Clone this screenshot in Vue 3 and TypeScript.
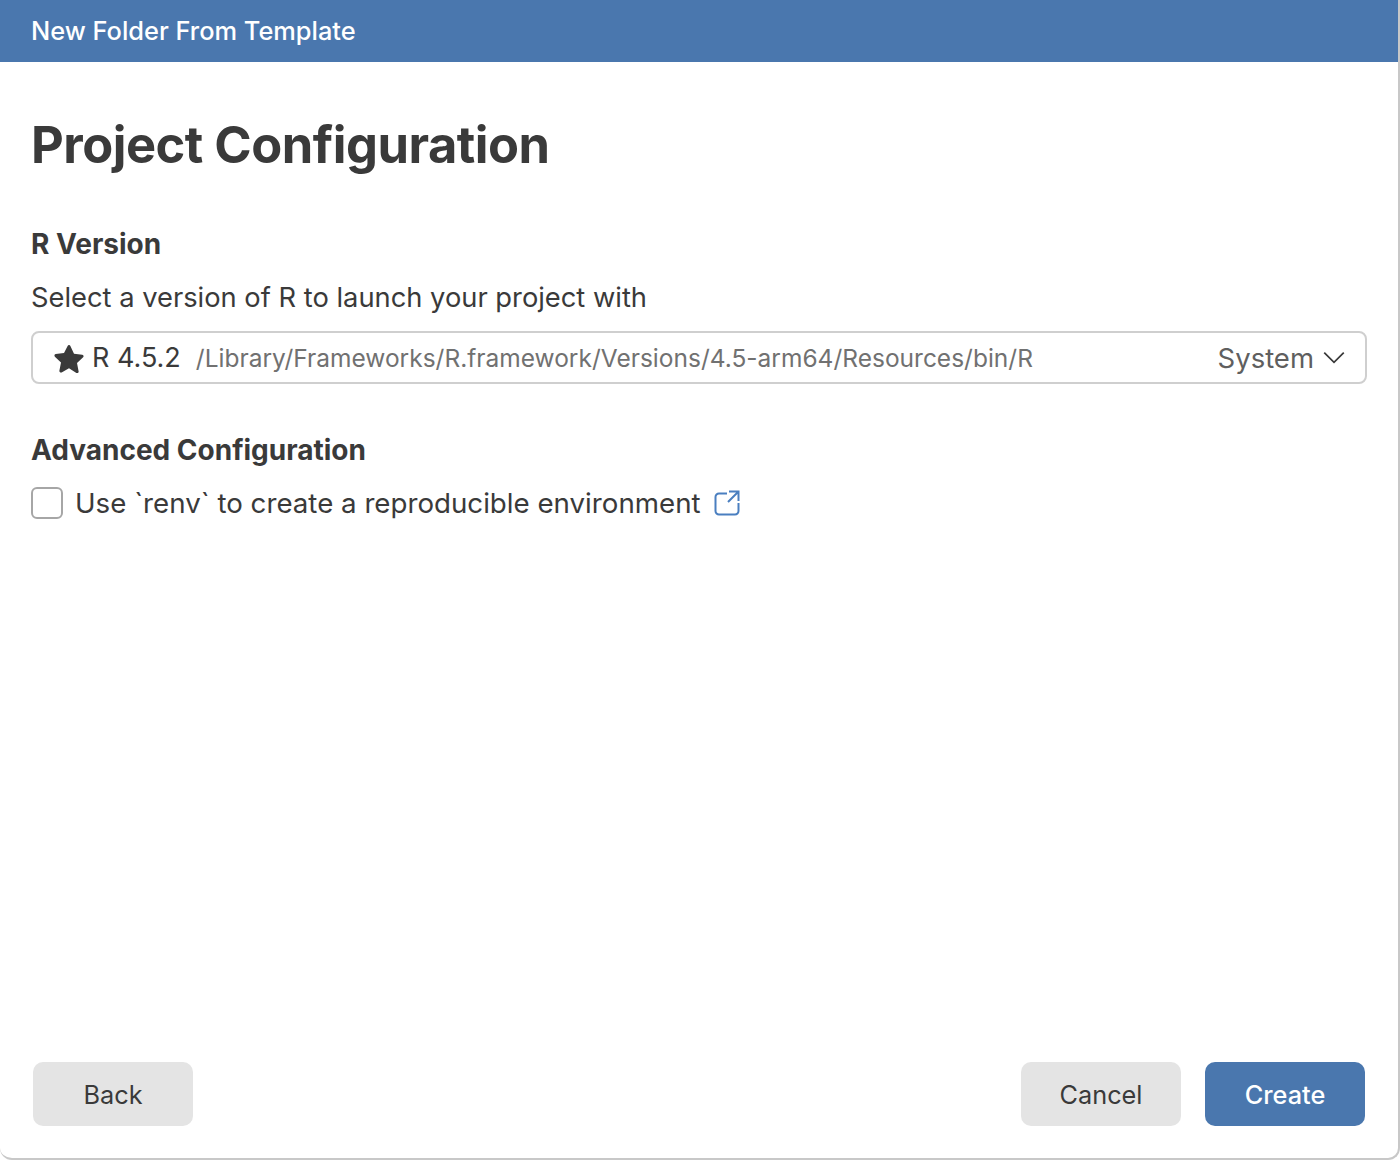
<script setup lang="ts">
const rVersion = {
  label: 'R 4.5.2',
  path: '/Library/Frameworks/R.framework/Versions/4.5-arm64/Resources/bin/R',
  source: 'System'
}
</script>

<template>
  <div class="dialog">
    <header class="title-bar">New Folder From Template</header>

    <main class="content">
      <h1 class="page-title">Project Configuration</h1>

      <section class="r-section">
        <h2 class="section-title">R Version</h2>
        <p class="section-description">Select a version of R to launch your project with</p>
        <div class="version-select">
          <svg class="star" viewBox="0 0 24 24" width="30" height="30" aria-hidden="true">
            <path d="M12 1.6c.5 0 .9.3 1.1.7l2.9 6.2 6.6.8c1 .1 1.4 1.4.7 2.1l-4.9 4.6 1.3 6.7c.2 1-.9 1.8-1.8 1.3L12 20.2l-5.9 3.3c-.9.5-2-.3-1.8-1.3l1.3-6.7-4.9-4.6c-.7-.7-.3-2 .7-2.1L8 8l2.9-5.7c.2-.4.6-.7 1.1-.7z" />
          </svg>
          <span class="version-label">{{ rVersion.label }}</span>
          <span class="version-path">{{ rVersion.path }}</span>
          <span class="version-source">{{ rVersion.source }}</span>
          <svg class="chevron" viewBox="0 0 20 12" width="22" height="13" aria-hidden="true">
            <path d="M1 1.5l9 9 9-9" />
          </svg>
        </div>
      </section>

      <section class="advanced-section">
        <h2 class="section-title">Advanced Configuration</h2>
        <label class="check-row">
          <input class="check" type="checkbox" />
          <span class="check-label">Use `renv` to create a reproducible environment</span>
          <svg class="external" viewBox="0 0 26 26" width="26" height="26" aria-hidden="true">
            <path d="M13 3.5H5a3.5 3.5 0 0 0-3.5 3.5v14A3.5 3.5 0 0 0 5 24.500h16a3.500 3.500 0 0 0 3.500-3.500v-8" />
            <path d="M15 1.500h9.500V11M24.500 1.500L14 12" />
          </svg>
        </label>
      </section>
    </main>

    <footer class="actions">
      <button class="btn" type="button">Back</button>
      <div class="actions-right">
        <button class="btn" type="button">Cancel</button>
        <button class="btn primary" type="button">Create</button>
      </div>
    </footer>
  </div>
</template>

<style>
html,
body {
  margin: 0;
  background: #ffffff;
}
</style>

<style scoped>
.dialog {
  box-sizing: border-box;
  width: 1400px;
  height: 1160px;
  display: flex;
  flex-direction: column;
  background: #ffffff;
  border-right: 2px solid #c8c8c8;
  border-bottom: 2px solid #c8c8c8;
  border-radius: 0 0 12px 12px;
  font-family: Inter, "Liberation Sans", sans-serif;
  color: #3a3a3a;
  overflow: hidden;
}

.title-bar {
  box-sizing: border-box;
  height: 62px;
  margin-right: -2px;
  padding: 0 0 2px 31px;
  display: flex;
  align-items: center;
  flex-shrink: 0;
  background: #4a77ae;
  color: #ffffff;
  font-size: 25.4px;
  font-weight: 500;
}

.content {
  flex: 1;
  padding: 0 31px;
}

.page-title {
  margin: 52px 0 0;
  font-size: 50.6px;
  line-height: 62px;
  font-weight: 700;
  letter-spacing: -0.5px;
}

.r-section {
  margin-top: 51px;
}

.section-title {
  margin: 0;
  font-size: 28px;
  line-height: 34px;
  font-weight: 700;
}

.section-description {
  margin: 20px 0 0;
  font-size: 27.3px;
  line-height: 34px;
}

.version-select {
  box-sizing: border-box;
  height: 53px;
  margin-top: 16px;
  padding: 0 20px 0 21px;
  display: flex;
  align-items: center;
  border: 2px solid #cfcfcf;
  border-radius: 8px;
}

.star {
  fill: #3a3a3a;
  flex-shrink: 0;
}

.version-label {
  margin-left: 8px;
  font-size: 27px;
}

.version-path {
  margin-left: 15px;
  font-size: 24.5px;
  color: #717171;
}

.version-source {
  margin-left: auto;
  font-size: 27.5px;
  color: #5f5f5f;
}

.chevron {
  margin-left: 9px;
  fill: none;
  stroke: #3a3a3a;
  stroke-width: 1.6;
}

.advanced-section {
  margin-top: 49px;
}

.check-row {
  margin-top: 19px;
  display: flex;
  align-items: center;
}

.check {
  box-sizing: border-box;
  width: 32px;
  height: 32px;
  margin: 0;
  appearance: none;
  background: #ffffff;
  border: 2px solid #a6a6a6;
  border-radius: 6px;
}

.check-label {
  margin-left: 12px;
  font-size: 27.7px;
  line-height: 34px;
}

.external {
  margin-left: 13px;
  fill: none;
  stroke: #4a7fc0;
  stroke-width: 2;
}

.actions {
  padding: 0 33px 32px;
  display: flex;
  justify-content: space-between;
}

.actions-right {
  display: flex;
  gap: 24px;
}

.btn {
  width: 160px;
  height: 64px;
  padding: 1px 0 0;
  border: none;
  border-radius: 10px;
  background: #e4e4e4;
  color: #3a3a3a;
  font-family: inherit;
  font-size: 25.3px;
}

.primary {
  background: #4a77ae;
  color: #ffffff;
  font-weight: 500;
}
</style>
